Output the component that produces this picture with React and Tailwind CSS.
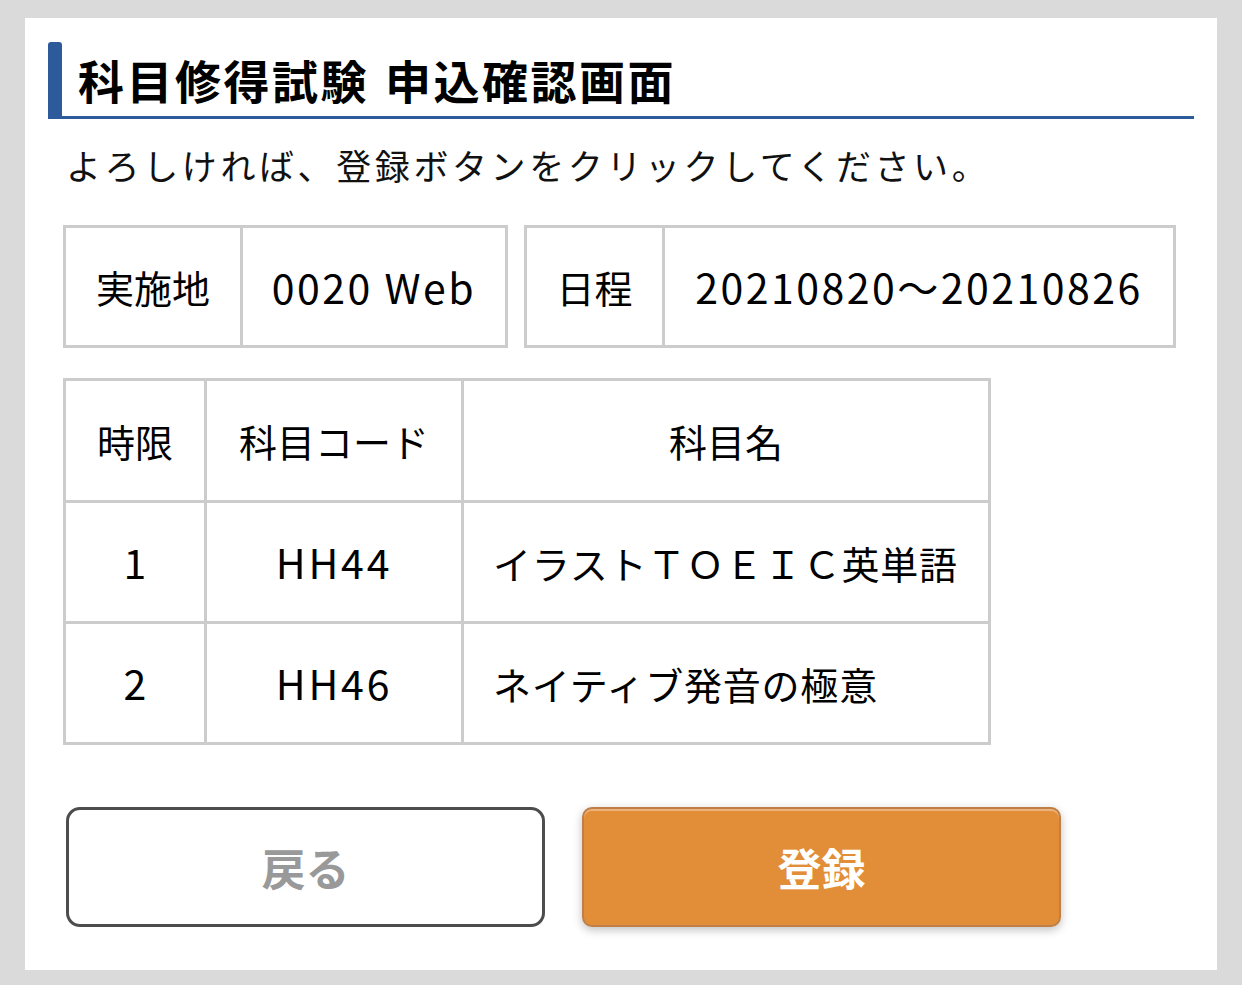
const font = { fontFamily: '"Noto Sans CJK JP", "Noto Sans", sans-serif' };

function InfoBox({ label, value, labelWidth, width }) {
  return (
    <div
      className="flex h-[123px] border-[3px] border-[#cccccc]"
      style={{ width }}
    >
      <div
        className="flex items-center justify-center border-r-[3px] border-[#cccccc] text-[38px] text-black"
        style={{ width: labelWidth }}
      >
        {label}
      </div>
      <div className="flex flex-1 items-center justify-center text-[41px] tracking-[2.5px] text-black">
        {value}
      </div>
    </div>
  );
}

const subjects = [
  { period: "1", code: "HH44", name: "イラストＴＯＥＩＣ英単語" },
  { period: "2", code: "HH46", name: "ネイティブ発音の極意" },
];

export default function App() {
  return (
    <div
      className="min-h-screen bg-[#dadada] px-[25px] pt-[18px] pb-[15px]"
      style={font}
    >
      <div className="h-[952px] bg-white">
        {/* heading */}
        <div className="mx-[23px] pt-[24px]">
          <div className="flex h-[77px] border-b-[3px] border-[#2c5a9a]">
            <div className="w-[14px] rounded-t-[3px] bg-[#2c5a9a]" />
            <h1 className="flex items-center gap-[16px] pl-[16px] text-[46px] font-bold leading-none tracking-[2.5px] text-black">
              <span>科目修得試験</span>
              <span>申込確認画面</span>
            </h1>
          </div>
        </div>

        <div className="px-[38px]">
          <p className="mt-[26px] pl-[3px] text-[35px] leading-[40px] tracking-[3.6px] text-[#111]">
            よろしければ、登録ボタンをクリックしてください。
          </p>

          <div className="mt-[40px] flex gap-[16px]">
            <InfoBox label="実施地" value="0020 Web" labelWidth={177} width={445} />
            <InfoBox
              label="日程"
              value="20210820～20210826"
              labelWidth={138}
              width={652}
            />
          </div>

          <table className="mt-[30px] w-[928px] border-collapse text-[38px] text-black">
            <thead>
              <tr className="h-[122px]">
                <th className="w-[141px] border-[3px] border-[#cccccc] font-normal">
                  時限
                </th>
                <th className="w-[257px] border-[3px] border-[#cccccc] font-normal">
                  科目コード
                </th>
                <th className="border-[3px] border-[#cccccc] font-normal">
                  科目名
                </th>
              </tr>
            </thead>
            <tbody>
              {subjects.map((s) => (
                <tr key={s.code} className="h-[121px]">
                  <td className="border-[3px] border-[#cccccc] text-center text-[41px]">
                    {s.period}
                  </td>
                  <td className="border-[3px] border-[#cccccc] text-center text-[41px] tracking-[2.8px]">
                    {s.code}
                  </td>
                  <td className="border-[3px] border-[#cccccc] pl-[29px] text-left tracking-[0.8px]">
                    {s.name}
                  </td>
                </tr>
              ))}
            </tbody>
          </table>

          <div className="mt-[62px] ml-[3px] flex gap-[37px]">
            <button className="flex h-[120px] w-[479px] items-center justify-center rounded-[14px] border-[3px] border-[#4d4d4d] bg-white text-[44px] font-bold text-[#999999]">
              戻る
            </button>
            <button className="flex h-[120px] w-[479px] items-center justify-center rounded-[10px] border-[2px] border-[#bf7f47] bg-[#e28d37] text-[44px] font-bold text-white shadow-[inset_0_2px_0_rgba(255,255,255,0.35),0_3px_10px_rgba(0,0,0,0.25)]">
              登録
            </button>
          </div>
        </div>
      </div>
    </div>
  );
}
